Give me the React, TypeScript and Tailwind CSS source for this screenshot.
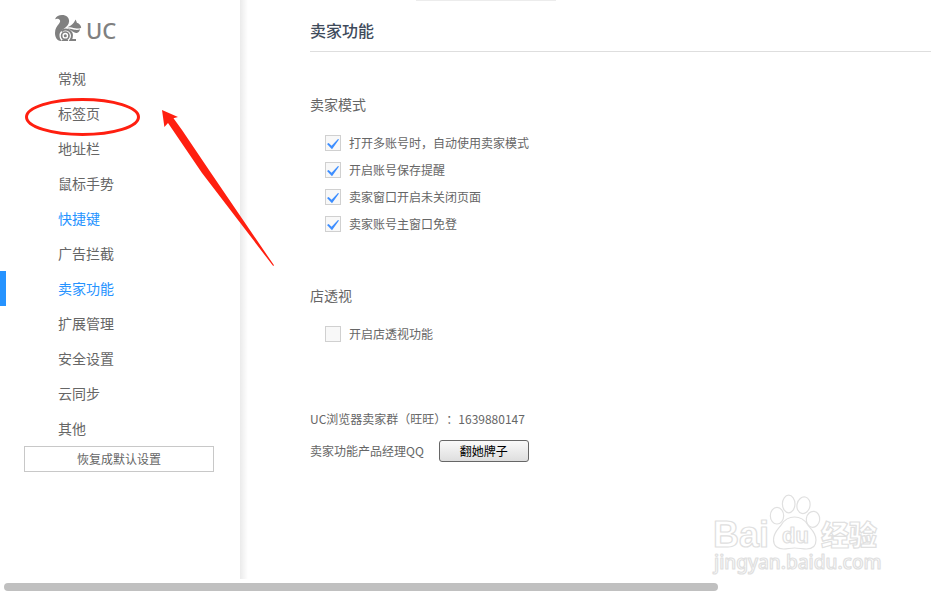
import { useState } from "react";
import clsx from "clsx";

const NAV_ITEMS = [
    "常规",
    "标签页",
    "地址栏",
    "鼠标手势",
    "快捷键",
    "广告拦截",
    "卖家功能",
    "扩展管理",
    "安全设置",
    "云同步",
    "其他",
];

const SELLER_OPTIONS = [
    { id: "auto-mode", label: "打开多账号时，自动使用卖家模式" },
    { id: "save-tip", label: "开启账号保存提醒" },
    { id: "reopen-tabs", label: "卖家窗口开启未关闭页面" },
    { id: "free-login", label: "卖家账号主窗口免登" },
];

function Logo() {
    return (
        <div className="flex h-7 items-center gap-1 pl-[54px] text-[#808080]">
            <svg className="h-7 w-7 shrink-0" viewBox="0 0 28 28" fill="currentColor" aria-hidden="true">
                {/* tail and back */}
                <path d="M1 5.200C2.200 2.300 4.800 1 8 1c4.400 0 7.300 2.600 7.100 6.300-.2 3.200-2.200 5-4.300 6.700-2.600 2.100-5.300 4-5.300 7.300 0 2.400.8 4.300 2.500 5.700H6.700C3 26.600 1 23 1 18.900c0-4.200 1.900-6.600 3.800-8.900 1.300-1.600 1.700-2.800 1-3.900C5 4.600 2.900 4.200 1 5.200z" />
                {/* head */}
                <path d="M13.200 13.300c2.700-.9 4.700-2.200 6.500-4.500L21.700 5.500l1.200 3.300c2.600.9 4 2.500 4.300 4.900-1.700.9-3.600 1.100-6.100.6-2.500-.5-4.800-1.200-7.900-1z" />
                {/* paws */}
                <path d="M13.500 14.600c3-.2 5.400.9 7.300 1.200 2.200.3 3.700.1 5.200-.5-.3 1.700-1.200 2.900-2.600 3.400-1.500.5-2.900.2-4.400-.9-1.500-1.200-3.300-2.200-5.500-3.200z" />
                {/* haunch */}
                <path
                    d="M7.500 17.200c2.600-2.400 6.300-2.300 8.600.1 2.500 2.700 2.300 5.900.4 8.800h5.500"
                    fill="none"
                    stroke="currentColor"
                    strokeWidth="2"
                />
                <circle cx="11.300" cy="21.700" r="3.700" fill="none" stroke="currentColor" strokeWidth="1.700" />
                <circle cx="11.300" cy="21.700" r="1.500" />
                <path d="M8 25.600h6V27H8z" />
            </svg>
            <span className="pt-1 font-['Noto_Sans'] text-[22px] leading-6 font-medium">UC</span>
        </div>
    );
}

function Sidebar() {
    const [active, setActive] = useState("卖家功能");

    return (
        <aside className="w-60 shrink-0 pt-[14px]">
            <Logo />
            <nav className="mt-[19px]">
                {NAV_ITEMS.map((item) => (
                    <a
                        key={item}
                        href="#"
                        onClick={() => setActive(item)}
                        className={clsx(
                            "block h-[35px] border-l-[6px] pl-[52px] text-sm leading-[35px]",
                            item === active ? "border-[#2693ff]" : "border-transparent",
                            item === active || item === "快捷键" ? "text-[#2693ff]" : "text-[#666]"
                        )}
                    >
                        {item}
                    </a>
                ))}
            </nav>
            <button
                type="button"
                className="ml-6 block h-[26px] w-[190px] border border-[#c8c8c8] bg-white text-xs text-[#666]"
            >
                恢复成默认设置
            </button>
        </aside>
    );
}

function Checkbox({ id, label, defaultChecked }: { id: string; label: string; defaultChecked?: boolean }) {
    return (
        <div className="flex h-[27px] items-center gap-2 pl-[15px]">
            <span className="grid size-4">
                <input
                    id={id}
                    type="checkbox"
                    defaultChecked={defaultChecked}
                    className="peer col-start-1 row-start-1 size-4 appearance-none border border-[#d0d0d0] bg-[#f8f8f8]"
                />
                <svg
                    className="pointer-events-none invisible col-start-1 row-start-1 size-4 peer-checked:visible"
                    viewBox="0 0 16 16"
                    fill="#3d8eff"
                    aria-hidden="true"
                >
                    <path d="M2 9l1.600-.9 3 2.600L13 4l1 .4-7 9.900z" />
                </svg>
            </span>
            <label htmlFor={id} className="text-xs text-[#666]">
                {label}
            </label>
        </div>
    );
}

function Watermark() {
    return (
        <svg
            className="pointer-events-none absolute right-[41px] bottom-[15px] h-[90px] w-[180px]"
            viewBox="0 0 180 90"
            fill="#fff"
            stroke="#e0e0e0"
            strokeWidth="1.200"
            strokeLinejoin="round"
        >
            <text x="3" y="57" fontSize="36" fontWeight="700" fontFamily="Liberation Sans, sans-serif">
                Bai
            </text>
            <ellipse cx="67" cy="25.700" rx="6.700" ry="8.300" />
            <ellipse cx="78.700" cy="14" rx="6.300" ry="8.800" />
            <ellipse cx="93.500" cy="15.200" rx="6.500" ry="8.400" transform="rotate(12 93.500 15.200)" />
            <ellipse cx="103" cy="29.300" rx="6.700" ry="8" transform="rotate(8 103 29.300)" />
            <path d="M84.500 27c7 0 10.500 3.500 13 7.500 2.500 4 8.500 7.500 8.500 15.500 0 6.500-4.500 9-9.500 9-4 0-8-1-12-1s-7 1-11 1c-5.500 0-10-3-10-9 0-8 5.500-11.500 8-15.500 2.500-4 6-7.500 13-7.500z" />
            <text x="72" y="53" fontSize="22" fontWeight="700" fontFamily="Liberation Sans, sans-serif">
                du
            </text>
            <text x="111" y="56" fontSize="28" fontWeight="900" fontFamily="Noto Sans CJK SC, sans-serif">
                经验
            </text>
            <text x="4" y="79" fontSize="19" fontWeight="500" fontFamily="Noto Sans, sans-serif">
                jingyan.baidu.com
            </text>
        </svg>
    );
}

function Annotations() {
    return (
        <svg
            className="pointer-events-none absolute top-0 left-0 h-[280px] w-[290px]"
            viewBox="0 0 290 280"
            aria-hidden="true"
        >
            <ellipse cx="82.500" cy="117" rx="56" ry="17.500" fill="none" stroke="#ff1f10" strokeWidth="3" />
            <path
                d="M162 110l16 7-4.500 1.300L182 130l29 43 63 92.300-.8.800L202 173l-34-50-3.600 4z"
                fill="#ff1f10"
            />
        </svg>
    );
}

export default function App() {
    return (
        <div className="relative flex min-h-screen flex-col bg-white font-['Noto_Sans_CJK_SC',sans-serif] [text-spacing-trim:space-all]">
            <div className="flex flex-1">
                <Sidebar />
                <div className="w-2 shrink-0 bg-linear-to-r from-[#ebebeb] to-white" />

                <main className="flex-1 pl-[62px] text-[#666]">
                    <h1 className="h-[52px] border-b border-[#dedede] pt-[18px] text-base leading-6 font-medium text-[#3f4b5b]">
                        卖家功能
                    </h1>

                    <section className="pt-[42px]">
                        <h2 className="mb-[15px] text-sm">卖家模式</h2>
                        {SELLER_OPTIONS.map((option) => (
                            <Checkbox key={option.id} id={option.id} label={option.label} defaultChecked />
                        ))}
                    </section>

                    <section className="pt-12">
                        <h2 className="mb-[15px] text-sm">店透视</h2>
                        <Checkbox id="shop-view" label="开启店透视功能" />
                    </section>

                    <section className="pt-16 text-xs">
                        <p>UC浏览器卖家群（旺旺）：1639880147</p>
                        <div className="mt-[13px] flex items-center gap-[15px]">
                            <span>卖家功能产品经理QQ</span>
                            <button
                                type="button"
                                className="h-[22px] w-[90px] rounded-[3px] border border-[#666] bg-linear-to-b from-[#fafafa] to-[#dedede] text-black"
                            >
                                翻她牌子
                            </button>
                        </div>
                    </section>
                </main>
            </div>

            {/* horizontal scrollbar */}
            <div className="h-4 px-1 pt-1">
                <div className="h-2 w-[77.4%] rounded-full bg-[#c0c0c0]" />
            </div>

            <div className="absolute top-0 left-[416px] h-px w-[140px] bg-[#ececec]" />
            <Watermark />
            <Annotations />
        </div>
    );
}
